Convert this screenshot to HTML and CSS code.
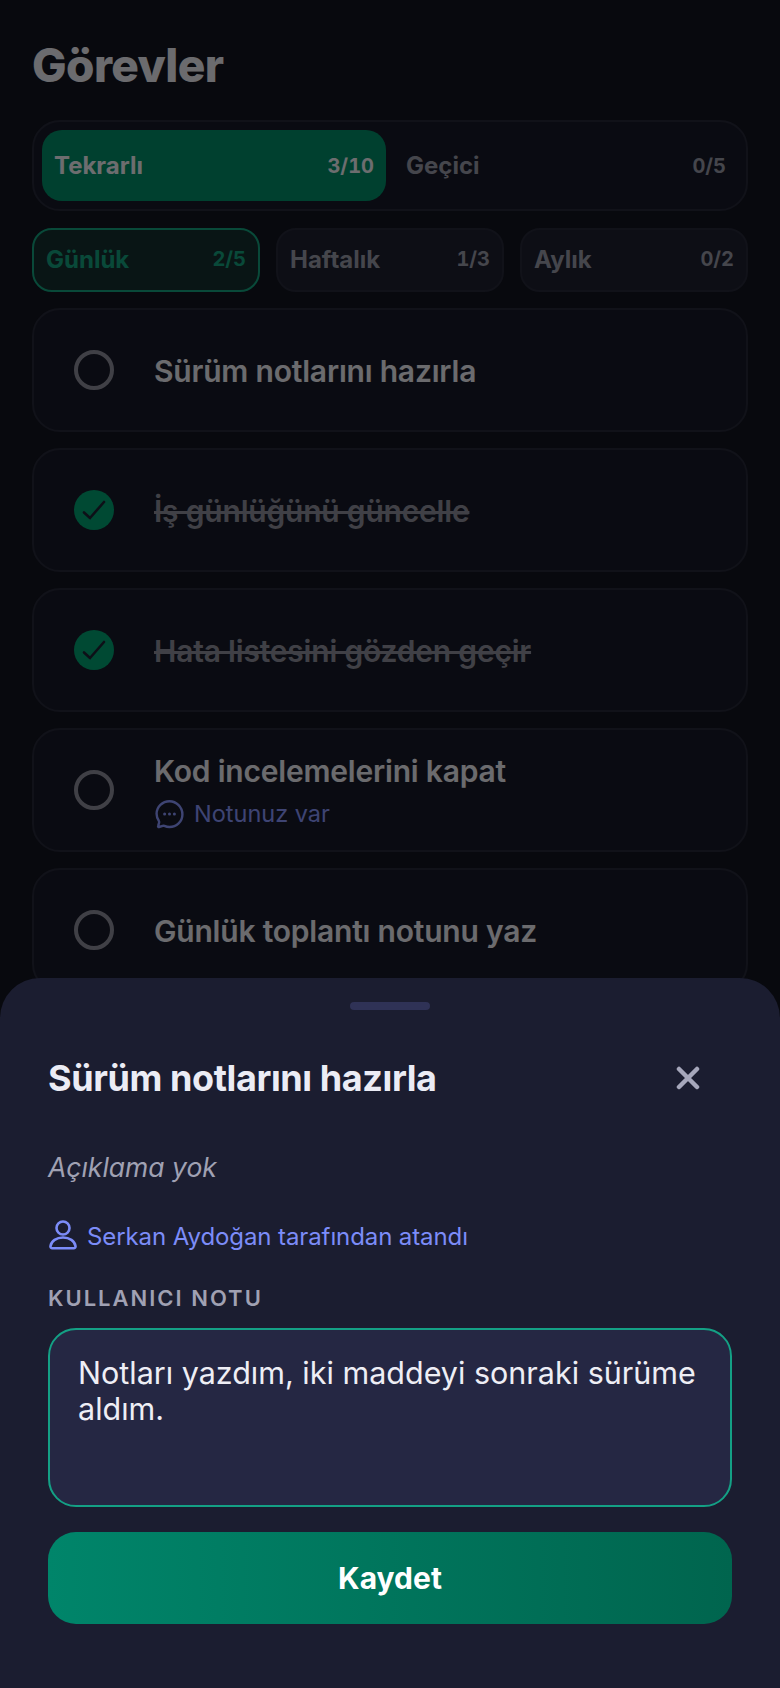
FILE: index.html
```html
<!DOCTYPE html>
<html lang="tr">
<head>
<meta charset="utf-8">
<title>Görevler</title>
<link rel="stylesheet" href="styles.css">
</head>
<body>
<div class="screen">
  <main class="page">
    <h1 class="title">Görevler</h1>
    <div class="tabs">
      <div class="tab tab-active"><span>Tekrarlı</span><span class="count">3/10</span></div>
      <div class="tab"><span>Geçici</span><span class="count">0/5</span></div>
    </div>
    <div class="subtabs">
      <div class="subtab subtab-active"><span>Günlük</span><span class="count">2/5</span></div>
      <div class="subtab"><span>Haftalık</span><span class="count">1/3</span></div>
      <div class="subtab"><span>Aylık</span><span class="count">0/2</span></div>
    </div>
    <div class="list">
      <div class="card">
        <span class="radio"></span>
        <div class="card-body"><div class="task">Sürüm notlarını hazırla</div></div>
      </div>
      <div class="card">
        <span class="radio radio-done"><svg viewBox="0 0 40 40" class="check"><path d="M10 22.5 16 28 30 12"/></svg></span>
        <div class="card-body"><div class="task task-done">İş günlüğünü güncelle</div></div>
      </div>
      <div class="card">
        <span class="radio radio-done"><svg viewBox="0 0 40 40" class="check"><path d="M10 22.5 16 28 30 12"/></svg></span>
        <div class="card-body"><div class="task task-done">Hata listesini gözden geçir</div></div>
      </div>
      <div class="card">
        <span class="radio"></span>
        <div class="card-body">
          <div class="task">Kod incelemelerini kapat</div>
          <div class="note-flag">
            <svg viewBox="0 0 30 30" class="chat-icon"><path class="line" d="M15.5 2.2C8.4 2.2 2.6 7.8 2.6 14.8c0 2.6.8 5 2.2 7 .4.6.5 1.2.3 1.9l-1 3.4c-.2.6.3 1 .9.9l3.7-1.2c.6-.2 1.2-.1 1.7.1 1.6.7 3.3 1.1 5.1 1.1 7.1 0 12.9-5.6 12.9-12.6S22.600 2.200 15.500 2.200z"/><circle cx="10.600" cy="15" r="1.500"/><circle cx="15.500" cy="15" r="1.500"/><circle cx="20.400" cy="15" r="1.500"/></svg>
            <span>Notunuz var</span>
          </div>
        </div>
      </div>
      <div class="card">
        <span class="radio"></span>
        <div class="card-body"><div class="task">Günlük toplantı notunu yaz</div></div>
      </div>
    </div>
  </main>
  <div class="overlay"></div>
  <section class="sheet">
    <div class="handle"></div>
    <div class="sheet-head">
      <h2 class="sheet-title">Sürüm notlarını hazırla</h2>
      <svg viewBox="0 0 24 24" class="close"><path d="M3 3 21 21M21 3 3 21"/></svg>
    </div>
    <p class="desc">Açıklama yok</p>
    <div class="assigned">
      <svg viewBox="0 0 28 30" class="person-icon"><circle cx="14" cy="8" r="6.500"/><path d="M14 17.500c-6.500 0-11.800 3.400-12.500 8.600-.2 1.200.7 2.100 1.800 2.100h21.400c1.100 0 2-.9 1.800-2.100-.7-5.200-6-8.600-12.500-8.600z"/></svg>
      <span>Serkan Aydoğan tarafından atandı</span>
    </div>
    <div class="label">KULLANICI NOTU</div>
    <div class="input">Notları yazdım, iki maddeyi sonraki sürüme aldım.</div>
    <div class="save">Kaydet</div>
  </section>
</div>
</body>
</html>
```
FILE: styles.css
```css
* { box-sizing: border-box; }
html, body { margin: 0; padding: 0; }
body { font-family: Inter, "Noto Sans", sans-serif; background: #12141f; }
.screen { position: relative; width: 780px; height: 1688px; overflow: hidden; background: #12141f; }
.page { padding: 38px 32px 0; }
.title { margin: 0 0 28px; font-size: 46px; line-height: 54px; font-weight: 800; color: #eeeef3; letter-spacing: -0.6px; }

.tabs { display: flex; gap: 8px; padding: 8px; height: 91px; border: 2px solid #262838; border-radius: 28px; background: #181a28; }
.tab { flex: 1; display: flex; align-items: center; justify-content: space-between; padding: 0 12px; border-radius: 20px; font-size: 24px; font-weight: 700; color: #9a9ba8; }
.tab-active { background: #008f68; color: #f2f2f7; }
.count { font-size: 20px; font-weight: 700; font-variant-numeric: tabular-nums; }

.subtabs { display: flex; gap: 16px; margin-top: 17px; }
.subtab { flex: 1; display: flex; align-items: center; justify-content: space-between; height: 64px; padding: 0 12px 2px; border: 2px solid #262838; border-radius: 20px; background: #1e2030; font-size: 24px; font-weight: 700; color: #9a9ba8; }
.subtab-active { border-color: #14a37f; background: #16302f; color: #14a37f; }

.list { display: flex; flex-direction: column; gap: 16px; margin-top: 16px; }
.card { display: flex; align-items: center; gap: 40px; height: 124px; padding: 0 40px; border: 2px solid #262838; border-radius: 28px; background: #181a28; }
.radio { flex: none; display: block; width: 40px; height: 40px; border: 4px solid #8e8f9c; border-radius: 50%; }
.radio-done { border: 0; background: #00a272; }
.check { display: block; width: 40px; height: 40px; fill: none; stroke: #1e2233; stroke-width: 2.600; stroke-linecap: round; stroke-linejoin: round; }
.card-body { min-width: 0; padding-top: 2px; }
.task { font-size: 30px; line-height: 38px; font-weight: 600; letter-spacing: -0.2px; color: #eeeef3; }
.task-done { color: #8e8f9c; text-decoration: line-through; }
.note-flag { display: flex; align-items: center; gap: 10px; margin-top: 8px; font-size: 23.500px; line-height: 32px; color: #8a98ff; }
.chat-icon { flex: none; width: 30px; height: 30px; fill: #8a98ff; }
.chat-icon .line { fill: none; stroke: #8a98ff; stroke-width: 2.400; }

.overlay { position: absolute; inset: 0; background: rgba(0, 0, 0, 0.55); }

.sheet { position: absolute; left: 0; right: 0; bottom: 0; height: 710px; padding: 24px 48px 0; border-radius: 40px 40px 0 0; background: #1b1d30; }
.handle { width: 80px; height: 8px; margin: 0 auto; border-radius: 4px; background: #2f3256; }
.sheet-head { display: flex; align-items: center; justify-content: space-between; margin-top: 46px; padding-right: 32px; }
.sheet-title { margin: 0; font-size: 36px; line-height: 44px; font-weight: 700; letter-spacing: -0.4px; color: #ebecf5; }
.close { flex: none; width: 24px; height: 24px; fill: none; stroke: #a6a7bb; stroke-width: 4.500; stroke-linecap: round; }
.desc { margin: 50px 0 0; font-size: 26.500px; line-height: 34px; font-style: italic; color: #a0a1b3; }
.assigned { display: flex; align-items: center; gap: 10px; margin-top: 37px; font-size: 24px; line-height: 32px; letter-spacing: -0.1px; color: #7c8cf8; }
.person-icon { flex: none; width: 28px; height: 30px; margin-left: 1px; margin-top: -5px; fill: none; stroke: #7c8cf8; stroke-width: 2.600; }
.label { margin-top: 31px; font-size: 22px; line-height: 28px; font-weight: 600; letter-spacing: 2px; color: #a0a1b3; }
.input { height: 179px; margin-top: 16px; padding: 25px 28px; border: 2px solid #14a085; border-radius: 28px; background: #252743; font-size: 30.500px; line-height: 36px; color: #eeeef5; }
.save { display: flex; align-items: center; justify-content: center; height: 92px; margin-top: 25px; border-radius: 28px; background: linear-gradient(90deg, #00856a, #00654e); font-size: 30px; font-weight: 700; color: #ffffff; }
```
